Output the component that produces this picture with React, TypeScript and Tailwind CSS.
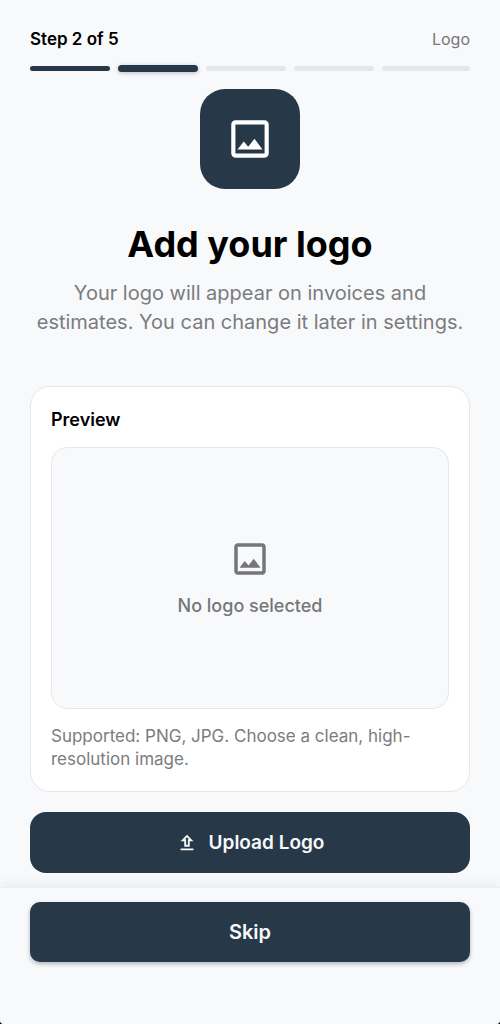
import React from "react";

const steps = ["done", "current", "todo", "todo", "todo"] as const;

function ImageIcon({ className }: { className: string }) {
  return (
    <svg viewBox="0 0 24 24" fill="currentColor" aria-hidden="true" className={className}>
      <path d="M19 5v14H5V5h14m0-2H5c-1.1 0-2 .9-2 2v14c0 1.1.9 2 2 2h14c1.1 0 2-.9 2-2V5c0-1.1-.9-2-2-2zm-4.86 8.86l-3 3.87L9 13.14 6 17h12l-3.86-5.14z" />
    </svg>
  );
}

function UploadIcon({ className }: { className: string }) {
  return (
    <svg viewBox="0 0 24 24" fill="currentColor" aria-hidden="true" className={className}>
      <path d="M5 20h14v-2H5v2zM5 10h4v6h6v-6h4l-7-7-7 7zm8-2v6h-2V8H9.83L12 5.83 14.17 8H13z" />
    </svg>
  );
}

function Progress() {
  return (
    <div className="grid h-2 grid-cols-5 items-center">
      {steps.map((state, i) => (
        <div key={i} className={i < steps.length - 1 ? "pr-2" : ""}>
          <div
            className={
              state === "current"
                ? "h-[7px] rounded-full bg-[#273849] shadow-[0_1px_4px_rgba(39,56,73,0.3)]"
                : state === "done"
                  ? "h-[5px] rounded-full bg-[#273849]"
                  : "h-[5px] rounded-full bg-[#e5e7ea]"
            }
          />
        </div>
      ))}
    </div>
  );
}

export default function App() {
  return (
    <div className="min-h-screen bg-black font-['Inter',sans-serif] text-black">
      <div className="flex min-h-screen flex-col overflow-hidden rounded-b bg-[#f8f9fb]">
        <header className="px-[30px] pt-7">
          <div className="mb-[14px] flex items-center justify-between text-[17px] leading-[22px]">
            <span className="font-semibold">Step 2 of 5</span>
            <span className="text-base leading-[22px] text-[#767779]">Logo</span>
          </div>
          <Progress />
        </header>

        <main className="flex flex-1 flex-col px-[30px] pt-[17px] pb-[14px]">
          <div className="flex size-[100px] items-center justify-center self-center rounded-[25px] bg-[#273849] text-white">
            <ImageIcon className="size-[50px]" />
          </div>
          <h1 className="mt-8 text-center text-4xl leading-[46px] font-bold">Add your logo</h1>
          <p className="mt-3 text-center text-xl leading-[29px] text-[#7b7c7e]">
            Your logo will appear on invoices and
            <br />
            estimates. You can change it later in settings.
          </p>

          <section className="mt-[49px] rounded-[20px] border border-[#e5e7ea] bg-white p-5">
            <h2 className="text-lg leading-[26px] font-semibold">Preview</h2>
            <div className="mt-[14px] flex h-[262px] flex-col items-center justify-center rounded-2xl border border-[#e5e7ea] bg-[#f8f9fb] text-[#757678]">
              <ImageIcon className="size-[42px]" />
              <p className="mt-[14px] text-lg leading-[24px] font-medium">No logo selected</p>
            </div>
            <p className="mt-4 text-[17px] leading-[23px] text-[#7b7c7e]">
              Supported: PNG, JPG. Choose a clean, high-
              <br />
              resolution image.
            </p>
          </section>

          <button
            type="button"
            className="mt-5 flex h-[61px] w-full items-center justify-center gap-[11px] rounded-2xl bg-[#273849] text-[19px] leading-[23px] font-semibold text-[#f8f9fb]"
          >
            <UploadIcon className="size-[22px]" />
            Upload Logo
          </button>
        </main>

        <footer className="border-t border-[#eceef0] bg-[#f8f9fb] px-[30px] pt-[14px] pb-[62px] shadow-[0_-4px_12px_rgba(0,0,0,0.05)]">
          <button
            type="button"
            className="h-[60px] w-full rounded-[10px] bg-[#273849] text-xl font-semibold text-[#f8f9fb] shadow-[0_2px_4px_rgba(39,56,73,0.35)]"
          >
            Skip
          </button>
        </footer>
      </div>
    </div>
  );
}
